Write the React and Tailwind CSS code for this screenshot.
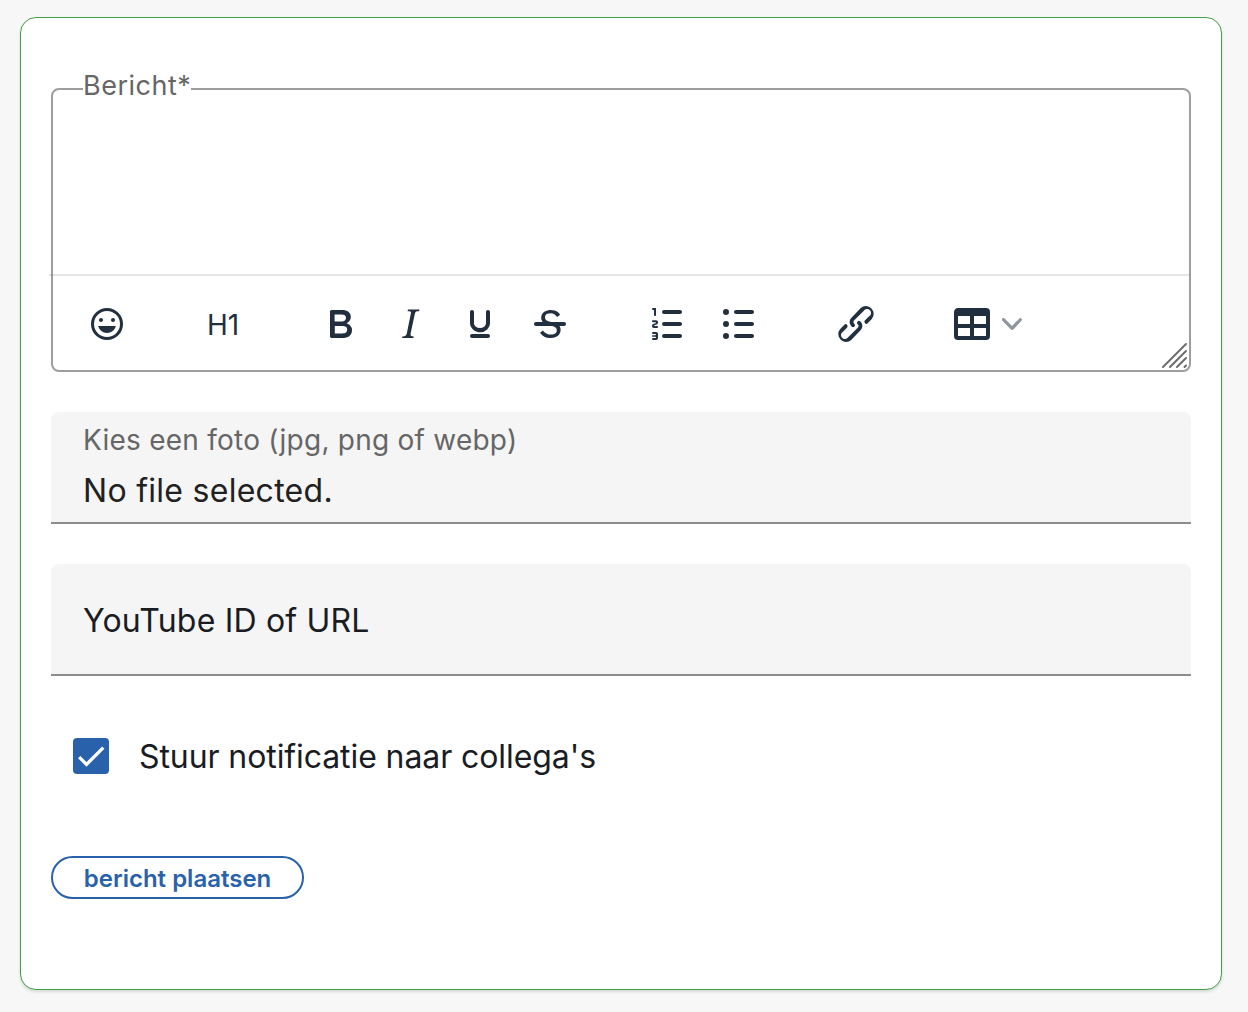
import React, { useState } from 'react';

const Icon = ({ children }) => (
  <svg width="48" height="48" viewBox="0 0 24 24" fill="currentColor" fillRule="evenodd">
    {children}
  </svg>
);

const icons = {
  emoji: (
    <path d="M9 11c.6 0 1-.4 1-1s-.4-1-1-1a1 1 0 0 0-1 1c0 .6.4 1 1 1Zm6 0c.6 0 1-.4 1-1s-.4-1-1-1a1 1 0 0 0-1 1c0 .6.4 1 1 1Zm-3 5.5c2.1 0 4-1.5 4.4-3.5H7.6c.5 2 2.3 3.5 4.4 3.5ZM12 4a8 8 0 1 0 0 16 8 8 0 0 0 0-16Zm0 14.5a6.5 6.5 0 1 1 0-13 6.5 6.5 0 0 1 0 13Z" />
  ),
  bold: (
    <path d="M7.8 19c-.3 0-.5 0-.6-.2l-.2-.5V5.7c0-.2 0-.4.2-.5l.6-.2h5c1.5 0 2.7.3 3.5 1 .7.6 1.1 1.4 1.1 2.5a3 3 0 0 1-.6 1.9c-.4.6-1 1-1.6 1.2.4.1.9.3 1.3.6s.8.7 1 1.2c.4.4.5 1 .5 1.6 0 1.3-.4 2.3-1.3 3-.8.7-2.1 1-3.8 1H7.8Zm5-8.3c.6 0 1.2-.1 1.6-.5.4-.3.6-.7.6-1.3 0-1.1-.8-1.7-2.3-1.7H9.3v3.5h3.4Zm.5 6c.7 0 1.3-.1 1.7-.4.4-.4.6-.9.6-1.5s-.2-1-.7-1.4c-.4-.3-1-.4-2-.4H9.4v3.8h4Z" />
  ),
  italic: (
    <path d="m16.7 4.7-.1.9h-.3c-.6 0-1 0-1.4.3-.3.3-.4.6-.5 1.1l-2.1 9.8v.6c0 .5.4.8 1.4.8h.2l-.2.8H8l.2-.8h.2c1.1 0 1.8-.5 2-1.5l2-9.8.1-.5c0-.6-.4-.8-1.4-.8h-.3l.2-.9h5.8Z" />
  ),
  underline: (
    <path d="M16 5c.6 0 1 .4 1 1v5.5a4 4 0 0 1-.4 1.8l-1 1.4a5.3 5.3 0 0 1-5.5 1 5 5 0 0 1-1.6-1c-.5-.4-.8-.9-1.1-1.4a4 4 0 0 1-.4-1.8V6c0-.6.4-1 1-1s1 .4 1 1v5.5c0 .3 0 .6.2 1l.6.7a3.3 3.3 0 0 0 2.2.8 3.4 3.4 0 0 0 2.2-.8c.3-.2.4-.5.6-.8l.2-.9V6c0-.6.4-1 1-1ZM8 17h8c.6 0 1 .4 1 1s-.4 1-1 1H8a1 1 0 0 1 0-2Z" />
  ),
  strike: (
    <>
      <path d="M15.6 8.5c-.5-.7-1-1.1-1.3-1.3-.6-.4-1.3-.6-2-.6-2.7 0-2.8 1.7-2.8 2.1 0 1.6 1.8 2 3.2 2.3 4.4.9 4.6 2.8 4.6 3.9 0 1.4-.7 4.1-5 4.1A6.2 6.2 0 0 1 7 16.4l1.5-1.1c.4.6 1.6 2 3.7 2 1.6 0 2.5-.4 3-1.2.4-.8.3-2-.8-2.6-.7-.4-1.6-.7-2.9-1-1-.2-3.9-.8-3.9-3.6C7.6 6 10.3 5 12.4 5c2.9 0 4.2 1.6 4.7 2.4l-1.5 1.1Z" />
      <path d="M5 11h14a1 1 0 0 1 0 2H5a1 1 0 0 1 0-2Z" />
    </>
  ),
  ordered: (
    <path d="M10 17h8c.6 0 1 .4 1 1s-.4 1-1 1h-8a1 1 0 0 1 0-2Zm0-6h8c.6 0 1 .4 1 1s-.4 1-1 1h-8a1 1 0 0 1 0-2Zm0-6h8c.6 0 1 .4 1 1s-.4 1-1 1h-8a1 1 0 1 1 0-2ZM6 4v3.5c0 .3-.2.5-.5.5a.5.5 0 0 1-.5-.5V5h-.5a.5.5 0 0 1 0-1H6Zm-1 8.8.2.2h1.3c.3 0 .5.2.5.5s-.2.5-.5.5H4.9a1 1 0 0 1-.9-1V13c0-.4.3-.8.6-1l1.2-.4.2-.3a.2.2 0 0 0-.2-.2H4.5a.5.5 0 0 1-.5-.5c0-.3.2-.5.5-.5h1.6c.5 0 .9.4.9 1v.1c0 .4-.3.8-.6 1l-1.2.4-.2.3ZM7 17v2c0 .6-.4 1-1 1H4.5a.5.5 0 0 1 0-1h1.2c.2 0 .3-.1.3-.3 0-.2-.1-.3-.3-.3H4.4a.4.4 0 1 1 0-.8h1.3c.2 0 .3-.1.3-.3 0-.2-.1-.3-.3-.3H4.5a.5.5 0 1 1 0-1H6c.6 0 1 .4 1 1Z" />
  ),
  bullets: (
    <>
      <path d="M11 5h8c.6 0 1 .4 1 1s-.4 1-1 1h-8a1 1 0 0 1 0-2Zm0 6h8c.6 0 1 .4 1 1s-.4 1-1 1h-8a1 1 0 0 1 0-2Zm0 6h8c.6 0 1 .4 1 1s-.4 1-1 1h-8a1 1 0 0 1 0-2Z" />
      <circle cx="6" cy="6" r="1.5" />
      <circle cx="6" cy="12" r="1.5" />
      <circle cx="6" cy="18" r="1.5" />
    </>
  ),
  link: (
    <path d="M6.2 12.3a1 1 0 0 1 1.4 1.4l-2 2a2 2 0 1 0 2.6 2.8l4.8-4.8a1 1 0 0 0 0-1.4 1 1 0 1 1 1.4-1.3 2.9 2.9 0 0 1 0 4L9.6 20a3.9 3.9 0 0 1-5.5-5.5l2-2Zm11.6-.6a1 1 0 0 1-1.4-1.4l2-2a2 2 0 1 0-2.6-2.8L11 10.3a1 1 0 0 0 0 1.4A1 1 0 1 1 9.6 13a2.9 2.9 0 0 1 0-4L14.4 4a3.9 3.9 0 0 1 5.5 5.5l-2 2Z" />
  ),
  table: (
    <path d="M19 4a2 2 0 0 1 2 2v12a2 2 0 0 1-2 2H5a2 2 0 0 1-2-2V6c0-1.1.9-2 2-2h14ZM5 14v4h6v-4H5Zm14 0h-6v4h6v-4Zm0-6h-6v4h6V8ZM5 12h6V8H5v4Z" />
  ),
};

const ToolButton = ({ label, icon }) => (
  <button type="button" aria-label={label} className="flex h-14 w-[68px] items-center justify-center">
    <Icon>{icons[icon]}</Icon>
  </button>
);

const Toolbar = () => (
  <div className="flex h-24 items-center pl-5 text-[#222f3e]">
    <ToolButton label="Emoji" icon="emoji" />
    <button type="button" className="mr-px ml-12 w-[68px] pt-0.5 text-center text-[28px] leading-none">
      H1
    </button>
    <div className="ml-12 flex gap-0.5">
      <ToolButton label="Vet" icon="bold" />
      <ToolButton label="Cursief" icon="italic" />
      <ToolButton label="Onderstreept" icon="underline" />
      <ToolButton label="Doorhalen" icon="strike" />
    </div>
    <div className="ml-[50px] flex gap-0.5">
      <ToolButton label="Genummerde lijst" icon="ordered" />
      <ToolButton label="Opsomming" icon="bullets" />
    </div>
    <div className="ml-[50px]">
      <ToolButton label="Link" icon="link" />
    </div>
    <button type="button" aria-label="Tabel" className="ml-[58px] flex items-center gap-1.5">
      <Icon>{icons.table}</Icon>
      <svg width="20" height="20" viewBox="0 0 10 10" fill="currentColor" className="opacity-50">
        <path d="M8.7 2.2c.3-.3.8-.3 1 0 .4.4.4.9 0 1.2L5.7 7.8c-.3.3-.9.3-1.2 0L.2 3.4a.8.8 0 0 1 0-1.2c.3-.3.8-.3 1.1 0L5 6l3.7-3.8Z" />
      </svg>
    </button>
    <svg
      width="25"
      height="25"
      viewBox="0 0 25 25"
      className="mr-0.5 mb-1 ml-auto self-end"
      fill="none"
      stroke="#6b6b6b"
      strokeWidth="1.9"
      strokeLinecap="round"
    >
      <path d="M1 24 24 1M8 24 24 8M15 24l9-9M22.5 24l1.5-1.5" />
    </svg>
  </div>
);

export default function App() {
  const [notify, setNotify] = useState(true);

  return (
    <main className="h-[1012px] w-[1248px] bg-[#f7f7f7] pt-[17px] pl-5 font-['Inter',sans-serif] text-[#1a1c23]">
      <form className="flex h-[973px] w-[1202px] flex-col rounded-2xl border border-[#43a047] bg-white px-[30px] pt-[51px] shadow-[0_2px_3px_rgba(0,0,0,0.12)]">
        {/* Message editor */}
        <fieldset className="h-[303px] w-full min-w-0 rounded-lg border-2 border-[#9e9e9e]">
          <legend className="ml-[30px] h-10 w-[108px] text-[27px] leading-[34px] tracking-[0.5px] whitespace-nowrap text-[#666]">
            Bericht*
          </legend>
          <div className="h-[165px]" />
          <div className="-ml-1 h-0.5 bg-black/10" />
          <Toolbar />
        </fieldset>

        {/* Photo upload */}
        <div className="mt-10 h-28 rounded-t-lg border-b-2 border-[#8c8c8c] bg-[#f5f5f5] pt-2.5 pl-8">
          <div className="text-[28px] leading-9 tracking-[0.24px] text-[#666]">Kies een foto (jpg, png of webp)</div>
          <div className="mt-[13px] text-[32px] leading-10 tracking-[0.28px] text-[#212121]">No file selected.</div>
        </div>

        {/* Video */}
        <div className="mt-10 flex h-28 items-center rounded-t-lg border-b-2 border-[#8c8c8c] bg-[#f5f5f5] pt-1 pl-8">
          <span className="text-[32px] tracking-[0.18px]">YouTube ID of URL</span>
        </div>

        <label className="mt-[62px] ml-[22px] flex h-9 items-center gap-[30px]">
          <input
            type="checkbox"
            className="sr-only"
            checked={notify}
            onChange={(e) => setNotify(e.target.checked)}
          />
          <span className="flex size-9 items-center justify-center rounded bg-[#2962ab]">
            {notify && (
              <svg width="36" height="36" viewBox="0 0 24 24" fill="none" stroke="white" strokeWidth="2.2">
                <path d="M4.1 12.7 9 17.6 20.2 6.4" />
              </svg>
            )}
          </span>
          <span className="pt-0.5 text-[32px] leading-9 tracking-[-0.09px]">Stuur notificatie naar collega's</span>
        </label>

        <button
          type="button"
          className="mt-[82px] h-[43px] w-[253px] rounded-full border-2 border-[#2962ab] pt-0.5 text-2xl leading-none font-semibold text-[#2962ab]"
        >
          bericht plaatsen
        </button>
      </form>
    </main>
  );
}
